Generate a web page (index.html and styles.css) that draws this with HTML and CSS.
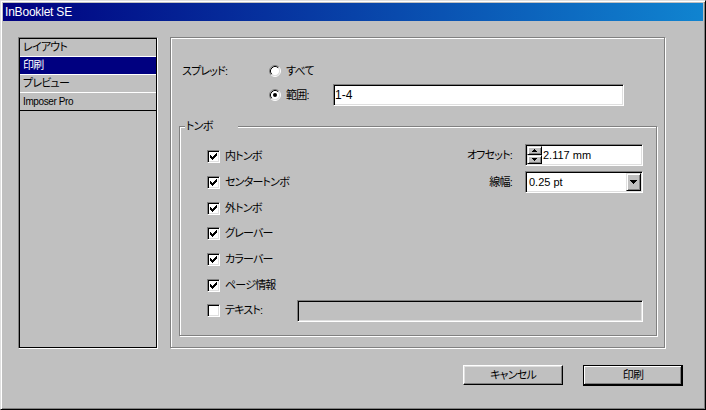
FILE: index.html
```html
<!DOCTYPE html>
<html lang="ja">
<head>
<meta charset="utf-8">
<title>InBooklet SE</title>
<link rel="stylesheet" href="styles.css">
</head>
<body>
<div class="window">
  <div class="titlebar"><span class="title">InBooklet SE</span></div>
  <div class="content">
    <div class="main">
      <ul class="pagelist">
        <li class="item">レイアウト</li>
        <li class="item selected">印刷</li>
        <li class="item">プレビュー</li>
        <li class="item last latin">Imposer Pro</li>
      </ul>
      <div class="panel">
        <div class="spread">
          <div class="spread-label">スプレッド:</div>
          <div class="opts">
            <div class="opt">
              <svg class="radio" width="12" height="12" viewBox="0 0 12 12"><circle cx="6" cy="6" r="4.5" fill="#fff"/><path d="M2.11 9.89A5.5 5.5 0 0 1 9.89 2.11" fill="none" stroke="#808080"/><path d="M9.89 2.11A5.5 5.5 0 0 1 2.11 9.89" fill="none" stroke="#fff"/><path d="M2.82 9.18A4.5 4.5 0 0 1 9.18 2.82" fill="none" stroke="#000"/><path d="M9.18 2.82A4.5 4.5 0 0 1 2.82 9.18" fill="none" stroke="#dfdfdf"/></svg>
              <span>すべて</span>
            </div>
            <div class="opt range">
              <svg class="radio" width="12" height="12" viewBox="0 0 12 12"><circle cx="6" cy="6" r="4.5" fill="#fff"/><path d="M2.11 9.89A5.5 5.5 0 0 1 9.89 2.11" fill="none" stroke="#808080"/><path d="M9.89 2.11A5.5 5.5 0 0 1 2.11 9.89" fill="none" stroke="#fff"/><path d="M2.82 9.18A4.5 4.5 0 0 1 9.18 2.82" fill="none" stroke="#000"/><path d="M9.18 2.82A4.5 4.5 0 0 1 2.82 9.18" fill="none" stroke="#dfdfdf"/><circle cx="6" cy="6" r="2" fill="#000"/></svg>
              <span class="range-label">範囲:</span>
              <div class="field range-field">1-4</div>
            </div>
          </div>
        </div>
        <div class="group">
          <div class="legend">トンボ</div>
          <div class="group-top">
            <div class="checks">
              <div class="check-row"><span class="cb"><svg width="11" height="11" viewBox="0 0 11 11"><path d="M2 4h1v3H2zM3 5h1v3H3zM4 6h1v3H4zM5 5h1v3H5zM6 4h1v3H6zM7 3h1v3H7zM8 2h1v3H8z"/></svg></span><span>内トンボ</span></div>
              <div class="check-row"><span class="cb"><svg width="11" height="11" viewBox="0 0 11 11"><path d="M2 4h1v3H2zM3 5h1v3H3zM4 6h1v3H4zM5 5h1v3H5zM6 4h1v3H6zM7 3h1v3H7zM8 2h1v3H8z"/></svg></span><span>センタートンボ</span></div>
              <div class="check-row"><span class="cb"><svg width="11" height="11" viewBox="0 0 11 11"><path d="M2 4h1v3H2zM3 5h1v3H3zM4 6h1v3H4zM5 5h1v3H5zM6 4h1v3H6zM7 3h1v3H7zM8 2h1v3H8z"/></svg></span><span>外トンボ</span></div>
              <div class="check-row"><span class="cb"><svg width="11" height="11" viewBox="0 0 11 11"><path d="M2 4h1v3H2zM3 5h1v3H3zM4 6h1v3H4zM5 5h1v3H5zM6 4h1v3H6zM7 3h1v3H7zM8 2h1v3H8z"/></svg></span><span>グレーバー</span></div>
              <div class="check-row"><span class="cb"><svg width="11" height="11" viewBox="0 0 11 11"><path d="M2 4h1v3H2zM3 5h1v3H3zM4 6h1v3H4zM5 5h1v3H5zM6 4h1v3H6zM7 3h1v3H7zM8 2h1v3H8z"/></svg></span><span>カラーバー</span></div>
              <div class="check-row"><span class="cb"><svg width="11" height="11" viewBox="0 0 11 11"><path d="M2 4h1v3H2zM3 5h1v3H3zM4 6h1v3H4zM5 5h1v3H5zM6 4h1v3H6zM7 3h1v3H7zM8 2h1v3H8z"/></svg></span><span>ページ情報</span></div>
            </div>
            <div class="settings">
              <div class="lbl">オフセット:</div>
              <div class="field spin">
                <div class="spinbtns">
                  <span class="sb"><svg width="5" height="3" viewBox="0 0 5 3"><path d="M2 0h1v1h1v1h1v1H0V2h1V1h1z"/></svg></span>
                  <span class="sb"><svg width="5" height="3" viewBox="0 0 5 3"><path d="M0 0h5v1H4v1H3v1H2V2H1V1H0z"/></svg></span>
                </div>
                <span class="val">2.117 mm</span>
              </div>
              <div class="lbl">線幅:</div>
              <div class="field select">
                <span class="val">0.25 pt</span>
                <span class="dropbtn"><svg width="7" height="4" viewBox="0 0 7 4"><path d="M0 0h7v1H6v1H5v1H4v1H3V3H2V2H1V1H0z"/></svg></span>
              </div>
            </div>
          </div>
          <div class="check-row text-row">
            <span class="cb"></span><span class="text-label">テキスト:</span>
            <div class="field disabled"></div>
          </div>
        </div>
      </div>
    </div>
    <div class="buttons">
      <div class="btn">キャンセル</div>
      <div class="btn default">印刷</div>
    </div>
  </div>
</div>
</body>
</html>
```
FILE: styles.css
```css
* { box-sizing: border-box; }
html, body { margin: 0; padding: 0; background: #c0c0c0; }
body {
  font-family: "Liberation Sans", "Noto Sans CJK JP", sans-serif;
  font-size: 11px;
  font-feature-settings: "palt";
  letter-spacing: -0.8px;
  color: #000;
  line-height: 1;
}
.window {
  width: 706px;
  height: 410px;
  border: 1px solid;
  border-color: #dfdfdf #000 #000 #dfdfdf;
  box-shadow: inset 1px 1px #fff, inset -1px -1px #808080;
  padding: 2px;
  display: flex;
  flex-direction: column;
}
.titlebar {
  height: 18px;
  flex: none;
  background: linear-gradient(to right, #000080, #1084d0);
  color: #fff;
  display: flex;
  align-items: center;
  padding-left: 2px;
  font-size: 12px;
  letter-spacing: -0.2px;
}
.content { padding: 16px 0 0 15px; }
.main { display: flex; }
.pagelist {
  list-style: none;
  margin: 0;
  width: 140px;
  height: 312px;
  border: 1px solid;
  border-color: #808080 #fff #fff #808080;
  box-shadow: inset 1px 1px #000, inset -1px -1px #000;
  padding: 1px;
}
.item {
  height: 18px;
  line-height: 17px;
  border-bottom: 1px solid #fff;
  padding-left: 3px;
}
.item.selected { background: #000080; color: #fff; }
.item.last { border-bottom-color: #000; }
.item.latin { font-size: 10px; letter-spacing: -0.4px; }
.panel {
  margin-left: 12px;
  width: 495px;
  height: 311px;
  border: 1px solid #808080;
  box-shadow: 1px 1px 0 #fff, inset 1px 1px 0 #fff;
}
.spread { display: flex; padding: 23px 0 0 11px; }
.spread-label { width: 87px; height: 20px; line-height: 20px; }
.opts { display: flex; flex-direction: column; gap: 3px; }
.opt { display: flex; align-items: center; height: 20px; }
.opt.range { height: 22px; }
.radio { margin-right: 5px; flex: none; }
.range-label { width: 47px; }
.field {
  border: 1px solid;
  border-color: #808080 #fff #fff #808080;
  box-shadow: inset 1px 1px #000, inset -1px -1px #dfdfdf;
  background: #fff;
  display: flex;
  align-items: center;
  height: 22px;
  padding: 0 1px;
  font-size: 11px;
  letter-spacing: 0;
}
.range-field { width: 291px; padding-left: 1px; font-size: 12px; }
.group {
  position: relative;
  margin: 20px 0 0 8px;
  width: 478px;
  height: 210px;
  border: 1px solid #808080;
  box-shadow: 1px 1px 0 #fff, inset 1px 1px 0 #fff;
  padding: 17px 13px 0 27px;
}
.legend {
  position: absolute;
  top: -8px;
  left: 5px;
  width: 53px;
  height: 14px;
  line-height: 14px;
  padding-left: 1px;
  background: #c0c0c0;
}
.group-top { display: flex; justify-content: space-between; }
.checks { display: flex; flex-direction: column; }
.check-row { height: 25.7px; display: flex; align-items: center; }
.cb {
  width: 13px;
  height: 13px;
  flex: none;
  margin-right: 5px;
  border: 1px solid;
  border-color: #808080 #fff #fff #808080;
  box-shadow: inset 1px 1px #000, inset -1px -1px #dfdfdf;
  background: #fff;
  display: block;
}
.cb svg { display: block; }
.settings {
  display: grid;
  grid-template-columns: auto 118px;
  column-gap: 13px;
  row-gap: 5px;
  align-content: start;
}
.lbl { text-align: right; align-self: center; }
.spin { padding: 1px 0 1px 1px; }
.spinbtns { display: flex; flex-direction: column; width: 15px; height: 18px; margin-right: 1px; }
.sb {
  height: 9px;
  display: flex;
  align-items: center;
  justify-content: center;
  background: #c0c0c0;
  border: 1px solid;
  border-color: #dfdfdf #000 #000 #dfdfdf;
  box-shadow: inset 1px 1px #fff, inset -1px -1px #808080;
}
.sb svg { display: block; }
.select { padding: 1px 1px 1px 3px; }
.select .val { flex: 1; }
.dropbtn {
  width: 15px;
  height: 18px;
  display: flex;
  align-items: center;
  justify-content: center;
  background: #c0c0c0;
  border: 1px solid;
  border-color: #dfdfdf #000 #000 #dfdfdf;
  box-shadow: inset 1px 1px #fff, inset -1px -1px #808080;
}
.dropbtn svg { display: block; }
.text-row .text-label { width: 72px; }
.field.disabled { flex: 1; background: #c0c0c0; }
.buttons {
  display: flex;
  justify-content: flex-end;
  gap: 20px;
  padding-right: 20px;
  margin-top: 16px;
}
.btn {
  width: 100px;
  height: 20px;
  display: flex;
  align-items: center;
  justify-content: center;
  border: 1px solid;
  border-color: #fff #000 #000 #fff;
  box-shadow: inset -1px -1px #808080, inset 1px 1px #dfdfdf;
}
.btn.default {
  height: 21px;
  border-color: #000;
  box-shadow: inset -1px -1px #000, inset 1px 1px #fff, inset -2px -2px #808080;
}
```
